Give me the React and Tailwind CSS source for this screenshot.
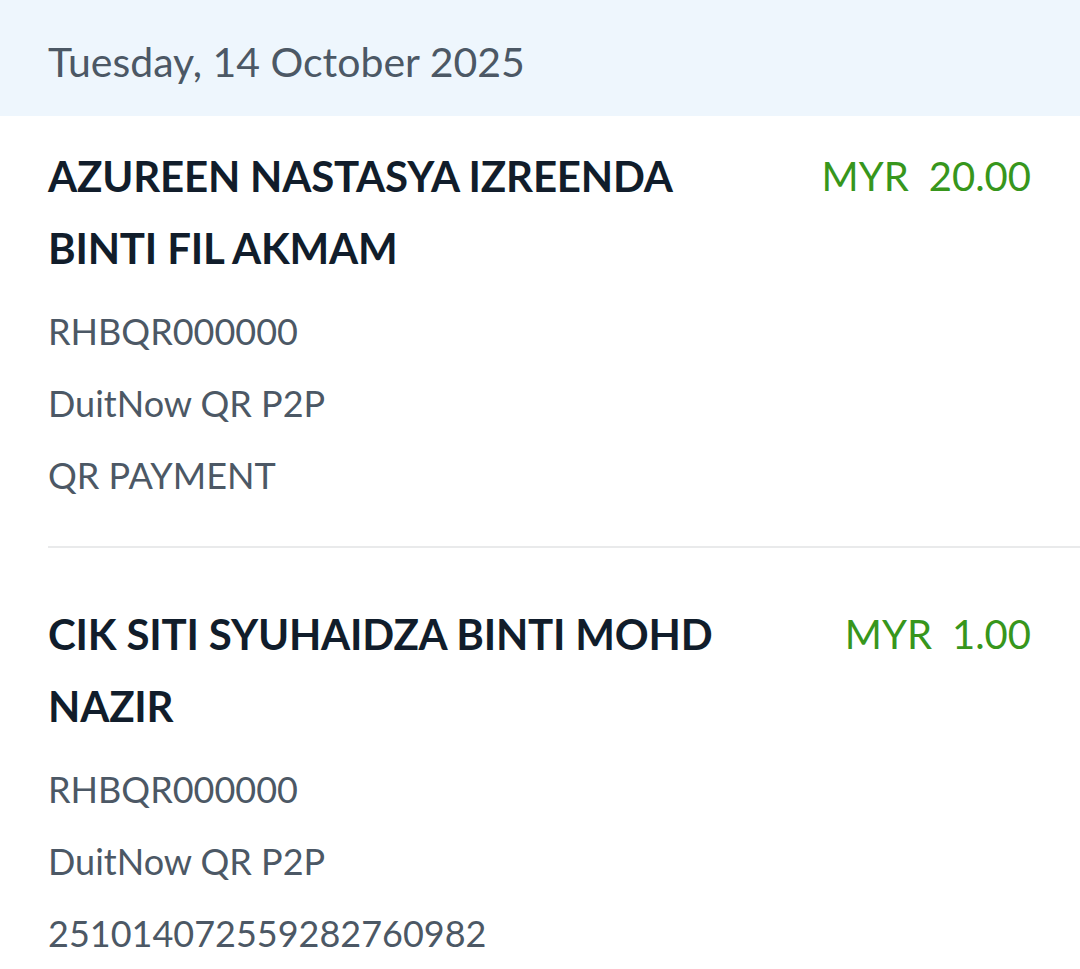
import React from "react";

const entries = [
  {
    name: "AZUREEN NASTASYA IZREENDA BINTI FIL AKMAM",
    amount: "20.00",
    lines: ["RHBQR000000", "DuitNow QR P2P", "QR PAYMENT"],
  },
  {
    name: "CIK SITI SYUHAIDZA BINTI MOHD NAZIR",
    amount: "1.00",
    lines: ["RHBQR000000", "DuitNow QR P2P", "25101407255928276098" + "2"],
  },
];

function Entry({ e, first }) {
  return (
    <div className={first ? "pt-[24px]" : "pt-[50px]"}>
      <div className="flex justify-between pl-12 pr-[49px]">
        <div className="max-w-[720px] text-[42px] leading-[72px] font-bold text-[#111d2b] tracking-[-0.2px]">
          {e.name}
        </div>
        <div className="flex gap-[20px] text-[40px] leading-[72px] text-[#37961c] shrink-0">
          <span>MYR</span>
          <span>{e.amount}</span>
        </div>
      </div>
      <div className="mt-[11px] pl-12 text-[36px] leading-[72px] text-[#4c5865]">
        {e.lines.map((l, i) => (
          <div key={i}>{l}</div>
        ))}
      </div>
    </div>
  );
}

export default function App() {
  return (
    <div className="w-[1080px] h-[969px] overflow-hidden bg-white" style={{ fontFamily: "Lato, 'Noto Sans', sans-serif" }}>
      <div className="h-[116px] bg-[#eef6fd] flex items-center pl-12 pt-[8px]">
        <span className="text-[41px] text-[#4c5865]">Tuesday, 14 October 2025</span>
      </div>
      <Entry e={entries[0]} first />
      <div className="mt-[35px] ml-12 h-[2px] bg-[#e9eaeb]" />
      <Entry e={entries[1]} />
    </div>
  );
}
